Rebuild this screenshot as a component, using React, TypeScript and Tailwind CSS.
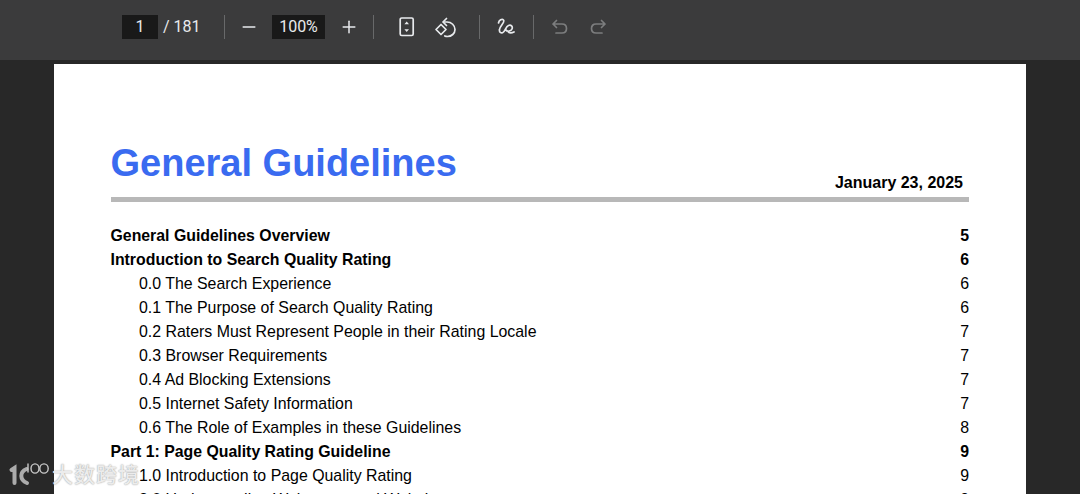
import { Minus, Plus } from "lucide-react";

const rows = [
  { label: "General Guidelines Overview", page: "5", bold: true },
  { label: "Introduction to Search Quality Rating", page: "6", bold: true },
  { label: "0.0 The Search Experience", page: "6" },
  { label: "0.1 The Purpose of Search Quality Rating", page: "6" },
  { label: "0.2 Raters Must Represent People in their Rating Locale", page: "7" },
  { label: "0.3 Browser Requirements", page: "7" },
  { label: "0.4 Ad Blocking Extensions", page: "7" },
  { label: "0.5 Internet Safety Information", page: "7" },
  { label: "0.6 The Role of Examples in these Guidelines", page: "8" },
  { label: "Part 1: Page Quality Rating Guideline", page: "9", bold: true },
  { label: "1.0 Introduction to Page Quality Rating", page: "9" },
  { label: "2.0 Understanding Webpages and Websites", page: "9" },
];

function Divider() {
  return <div className="h-6 w-px bg-[#68696a]" />;
}

export default function App() {
  return (
    <div className="relative h-[494px] w-[1080px] overflow-hidden bg-[#282828] font-['Liberation_Sans',sans-serif]">
      {/* Toolbar */}
      <div className="flex h-[60px] items-center bg-[#3b3b3c] pb-[6px] pl-[122px] font-['Roboto',sans-serif] text-[#e8eaed]">
        <div className="flex h-6 w-9 items-center justify-center bg-[#191919] text-[16px]">1</div>
        <span className="ml-[5px] w-[37px] whitespace-nowrap text-[16px]">/ 181</span>
        <div className="ml-[24px]"><Divider /></div>
        <Minus className="ml-[14px] h-5 w-5" strokeWidth={1.8} />
        <div className="ml-[13px] flex h-6 w-[53px] items-center justify-center bg-[#191919] text-[16px]">100%</div>
        <Plus className="ml-[14px] h-5 w-5" strokeWidth={1.8} />
        <div className="ml-[14px]"><Divider /></div>
        {/* fit to page */}
        <svg className="ml-[24px]" width="18" height="22" viewBox="0 0 18 22" fill="none" stroke="#e8eaed" strokeWidth="1.7">
          <rect x="2.2" y="2" width="13" height="17.5" rx="1.5" />
          <path d="M8.7 5.6 L11 8.2 H6.4 Z M8.7 15.9 L11 13.3 H6.4 Z" fill="#e8eaed" stroke="none" />
        </svg>
        {/* rotate */}
        <svg className="ml-[17px]" width="24" height="24" viewBox="0 0 24 24" fill="none" stroke="#e8eaed" strokeWidth="1.7" strokeLinecap="round" strokeLinejoin="round">
          <path d="M13.5 3.5 L10 7 L13.5 10.5" />
          <path d="M10.5 7 H14 C18.5 7 22 10.5 22 14.5 C22 18.5 18.5 21.5 14.5 21.5 C13.5 21.5 12.6 21.4 11.8 21" />
          <path d="M8 9.5 L13 14.5 L8 19.5 L3 14.5 Z" />
        </svg>
        <div className="ml-[22px]"><Divider /></div>
        {/* draw */}
        <svg className="ml-[16px]" width="20" height="20" viewBox="0 0 20 20" fill="none" stroke="#e8eaed" strokeWidth="1.7" strokeLinecap="round" strokeLinejoin="round">
          <path d="M2.5 6 C3 3 6 1.5 7.5 3 C9.5 5 4 9 3.5 12.5 C3 15.5 5.5 17 7.5 15 C9.5 13 10 9.5 12.5 8.5 C15 7.5 17 9.5 16 12 C15 14.5 11 15 10 13 M12 14.5 C13.5 16.5 16 16 18 15" />
        </svg>
        <div className="ml-[17px]"><Divider /></div>
        {/* undo */}
        <svg className="ml-[16px]" width="20" height="20" viewBox="0 0 20 20" fill="none" stroke="#7c7d7e" strokeWidth="1.7" strokeLinecap="round" strokeLinejoin="round">
          <path d="M6.5 3.5 L3 7 L6.5 10.5 M3 7 H12 C15 7 16.5 9 16.5 11.5 C16.5 14 15 16 12 16 H6" />
        </svg>
        {/* redo */}
        <svg className="ml-[18px]" width="20" height="20" viewBox="0 0 20 20" fill="none" stroke="#7c7d7e" strokeWidth="1.7" strokeLinecap="round" strokeLinejoin="round">
          <path d="M13.5 3.5 L17 7 L13.5 10.5 M17 7 H8 C5 7 3.5 9 3.5 11.5 C3.5 14 5 16 8 16 H14" />
        </svg>
      </div>

      {/* Page */}
      <div className="mx-[54px] mt-[4px] h-[500px] w-[972px] bg-white px-[57px] pt-[76px] text-black">
        <div className="flex h-[57px] items-start justify-between">
          <h1 className="ml-[-0.5px] text-[38px] font-bold leading-[47px] text-[#3a6bf0]">General Guidelines</h1>
          <span className="mr-[6px] mt-[33px] text-[16px] font-bold leading-[20px]">January 23, 2025</span>
        </div>
        <div className="h-[5px] bg-[#b8b8b8]" />
        <div className="ml-[-0.5px] mt-[22px]">
          {rows.map((r) => (
            <div
              key={r.label}
              className={
                r.bold
                  ? "flex h-6 items-center justify-between text-[15.85px] font-bold"
                  : "flex h-6 items-center justify-between pl-[28.5px] text-[15.9px]"
              }
            >
              <span>{r.label}</span>
              <span>{r.page}</span>
            </div>
          ))}
        </div>
      </div>

      {/* Watermark */}
      <div className="absolute left-[8px] top-[458px] flex items-center">
        <svg width="44" height="30" viewBox="0 0 44 30" fill="none" stroke="#ababab" strokeLinecap="round">
          <path d="M3.5 11 L6.5 9 V24" strokeWidth="4" />
          <path d="M18.5 10 C11.5 13 11.5 21 19 24" strokeWidth="4" />
          <path d="M20 5 V13" strokeWidth="1.4" stroke="#c8c8c8" />
          <ellipse cx="27" cy="9.5" rx="4" ry="4.6" strokeWidth="1.4" stroke="#c8c8c8" />
          <ellipse cx="36" cy="9.5" rx="4.2" ry="4.6" strokeWidth="1.4" stroke="#c8c8c8" />
        </svg>
        <span className="font-['Noto_Sans_CJK_SC',sans-serif] text-[21px] font-medium tracking-[1px] text-[#ececec] [text-shadow:0_0_1.5px_#8a8a8a]">大数跨境</span>
      </div>
    </div>
  );
}
